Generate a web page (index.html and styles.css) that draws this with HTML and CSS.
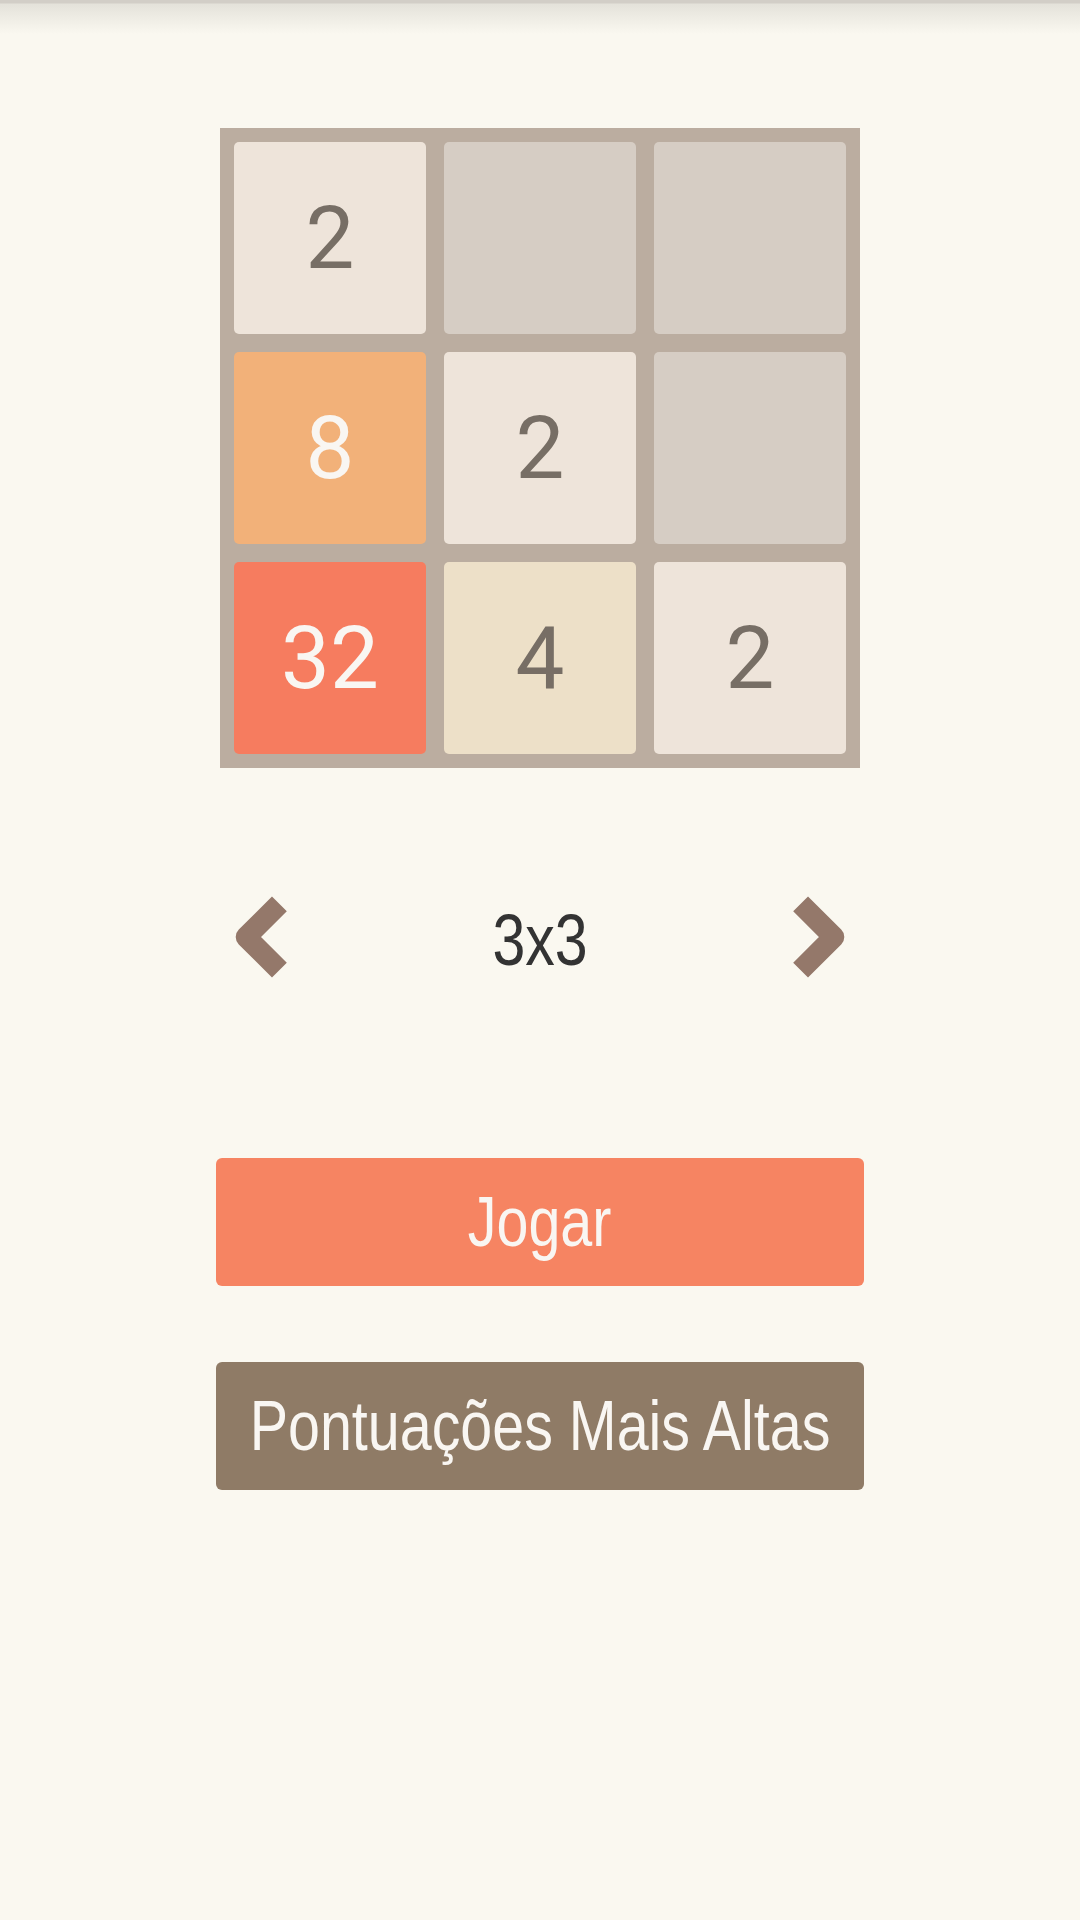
FILE: index.html
```html
<!DOCTYPE html>
<html lang="pt">

<head>
  <meta charset="UTF-8">
  <meta name="viewport" content="width=device-width, initial-scale=1.0">
  <title>2048</title>
  <link rel="stylesheet" href="styles.css">
</head>

<body>
  <div class="topbar"></div>
  <main class="menu">
    <div class="board">
      <div class="tile t2">2</div>
      <div class="tile"></div>
      <div class="tile"></div>
      <div class="tile t8">8</div>
      <div class="tile t2">2</div>
      <div class="tile"></div>
      <div class="tile t32">32</div>
      <div class="tile t4">4</div>
      <div class="tile t2">2</div>
    </div>

    <div class="picker">
      <button class="arrow" aria-label="anterior">
        <svg viewBox="0 0 56 82"><polyline points="48.4,7.9 15.2,41 48.4,74.1" /></svg>
      </button>
      <span class="size"><span class="narrow">3x3</span></span>
      <button class="arrow" aria-label="seguinte">
        <svg viewBox="0 0 56 82"><polyline points="7.6,7.9 40.8,41 7.6,74.1" /></svg>
      </button>
    </div>

    <button class="btn play"><span class="narrow">Jogar</span></button>
    <button class="btn scores"><span class="narrow">Pontuações Mais Altas</span></button>
  </main>
</body>

</html>
```

FILE: styles.css
```css
body {
  margin: 0;
  background: #faf8f0;
  font-family: "Liberation Sans", Arial, sans-serif;
}

.topbar {
  height: 34px;
  background: linear-gradient(to bottom, #d2cec7 0, #d2cec7 3px, #e4e2da 4px, #faf8f0 34px);
}

.menu {
  display: flex;
  flex-direction: column;
  align-items: center;
  padding-top: 94px;
}

/* condensed look of the app font */
.narrow {
  display: inline-block;
  flex-shrink: 0;
  white-space: nowrap;
  transform: scaleX(0.82);
}

.board {
  box-sizing: border-box;
  width: 640px;
  height: 640px;
  padding: 14px;
  display: grid;
  grid-template-columns: repeat(3, 1fr);
  grid-template-rows: repeat(3, 1fr);
  gap: 18px;
  background: #bbada0;
}

.tile {
  display: flex;
  align-items: center;
  justify-content: center;
  border-radius: 5px;
  background: #d6cdc4;
  color: #776e65;
  font-family: Roboto, sans-serif;
  font-size: 87px;
  line-height: 1;
}

.tile.t2 {
  background: #eee4da;
}

.tile.t4 {
  background: #ede0c8;
}

.tile.t8 {
  background: #f2b179;
  color: #f9f6f2;
}

.tile.t32 {
  background: #f67c5f;
  color: #f9f6f2;
}

.picker {
  box-sizing: border-box;
  width: 640px;
  margin-top: 128px;
  padding: 0 11px;
  display: flex;
  justify-content: space-between;
  align-items: center;
}

.arrow {
  padding: 0;
  border: none;
  background: none;
  cursor: pointer;
}

.arrow svg {
  display: block;
  width: 56px;
  height: 82px;
}

.arrow polyline {
  fill: none;
  stroke: #94786a;
  stroke-width: 21;
  stroke-linejoin: round;
}

.size {
  margin-top: 5px;
  color: #333;
  font-size: 72px;
  line-height: 1;
}

.btn {
  width: 648px;
  height: 128px;
  padding: 0;
  display: flex;
  align-items: center;
  justify-content: center;
  border: none;
  border-radius: 6px;
  color: #f9f6f2;
  font-family: inherit;
  font-size: 70px;
  line-height: 1;
  cursor: pointer;
}

.btn.play {
  margin-top: 180px;
  background: #f68462;
}

.btn.scores {
  margin-top: 76px;
  background: #8f7b66;
}
```
